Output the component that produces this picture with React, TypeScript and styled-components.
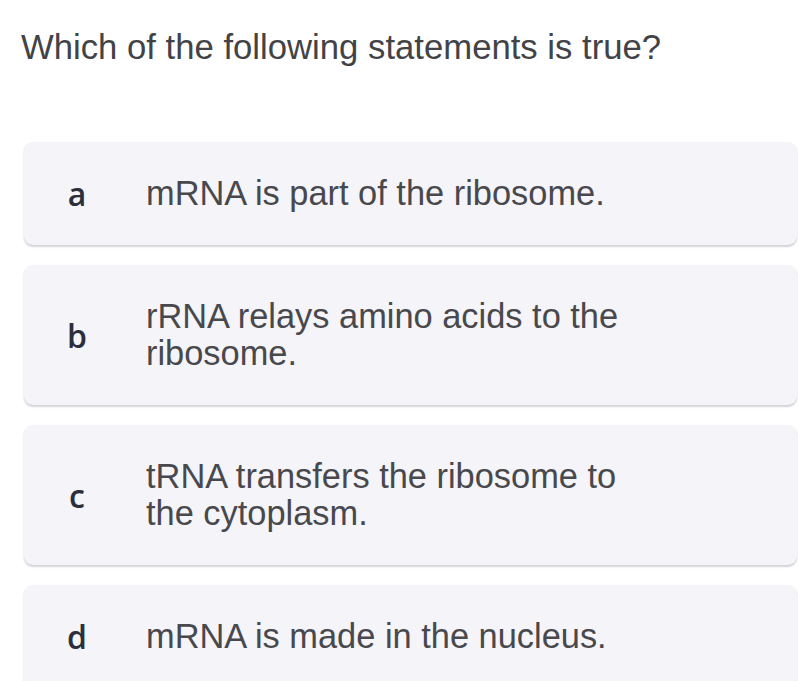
import React, { FC } from 'react';
import styled, { createGlobalStyle } from 'styled-components';

const GlobalStyle = createGlobalStyle`
  html, body {
    margin: 0;
    padding: 0;
    background: #ffffff;
  }
  body {
    font-family: "Liberation Sans", Arial, Helvetica, sans-serif;
    -webkit-font-smoothing: antialiased;
  }
`;

const Page = styled.div`
  width: 798px;
  height: 681px;
  overflow: hidden;
  box-sizing: border-box;
  padding: 28px 1px 0 24px;
`;

const Question = styled.h1`
  margin: 0 0 75px -3px;
  font-size: 34.7px;
  font-weight: 400;
  line-height: normal;
  color: #434347;
`;

const Options = styled.div`
  display: flex;
  flex-direction: column;
  gap: 20px;
`;

const OptionCard = styled.div`
  display: flex;
  align-items: center;
  padding: 33px 0;
  background: #f4f4f9;
  border-radius: 9px;
  box-shadow: 0 2px 2px rgba(40, 40, 60, 0.2), 0 0 1px rgba(40, 40, 60, 0.06);
`;

const Letter = styled.span`
  width: 58px;
  margin-left: 24px;
  flex-shrink: 0;
  text-align: center;
  font-family: "Open Sans", "Liberation Sans", sans-serif;
  font-size: 32px;
  line-height: 37px;
  font-weight: 600;
  color: #2b2e3b;
`;

const OptionText = styled.span`
  margin-left: 40px;
  max-width: 500px;
  font-size: 34.4px;
  line-height: 37px;
  color: #48484d;
`;

interface Option {
  key: string;
  text: string;
}

const options: Option[] = [
  { key: 'a', text: 'mRNA is part of the ribosome.' },
  { key: 'b', text: 'rRNA relays amino acids to the ribosome.' },
  { key: 'c', text: 'tRNA transfers the ribosome to the cytoplasm.' },
  { key: 'd', text: 'mRNA is made in the nucleus.' },
];

const App: FC = () => (
  <>
    <GlobalStyle />
    <Page>
      <Question>Which of the following statements is true?</Question>
      <Options>
        {options.map((option) => (
          <OptionCard key={`option-${option.key}`}>
            <Letter>{option.key}</Letter>
            <OptionText>{option.text}</OptionText>
          </OptionCard>
        ))}
      </Options>
    </Page>
  </>
);

export default App;
